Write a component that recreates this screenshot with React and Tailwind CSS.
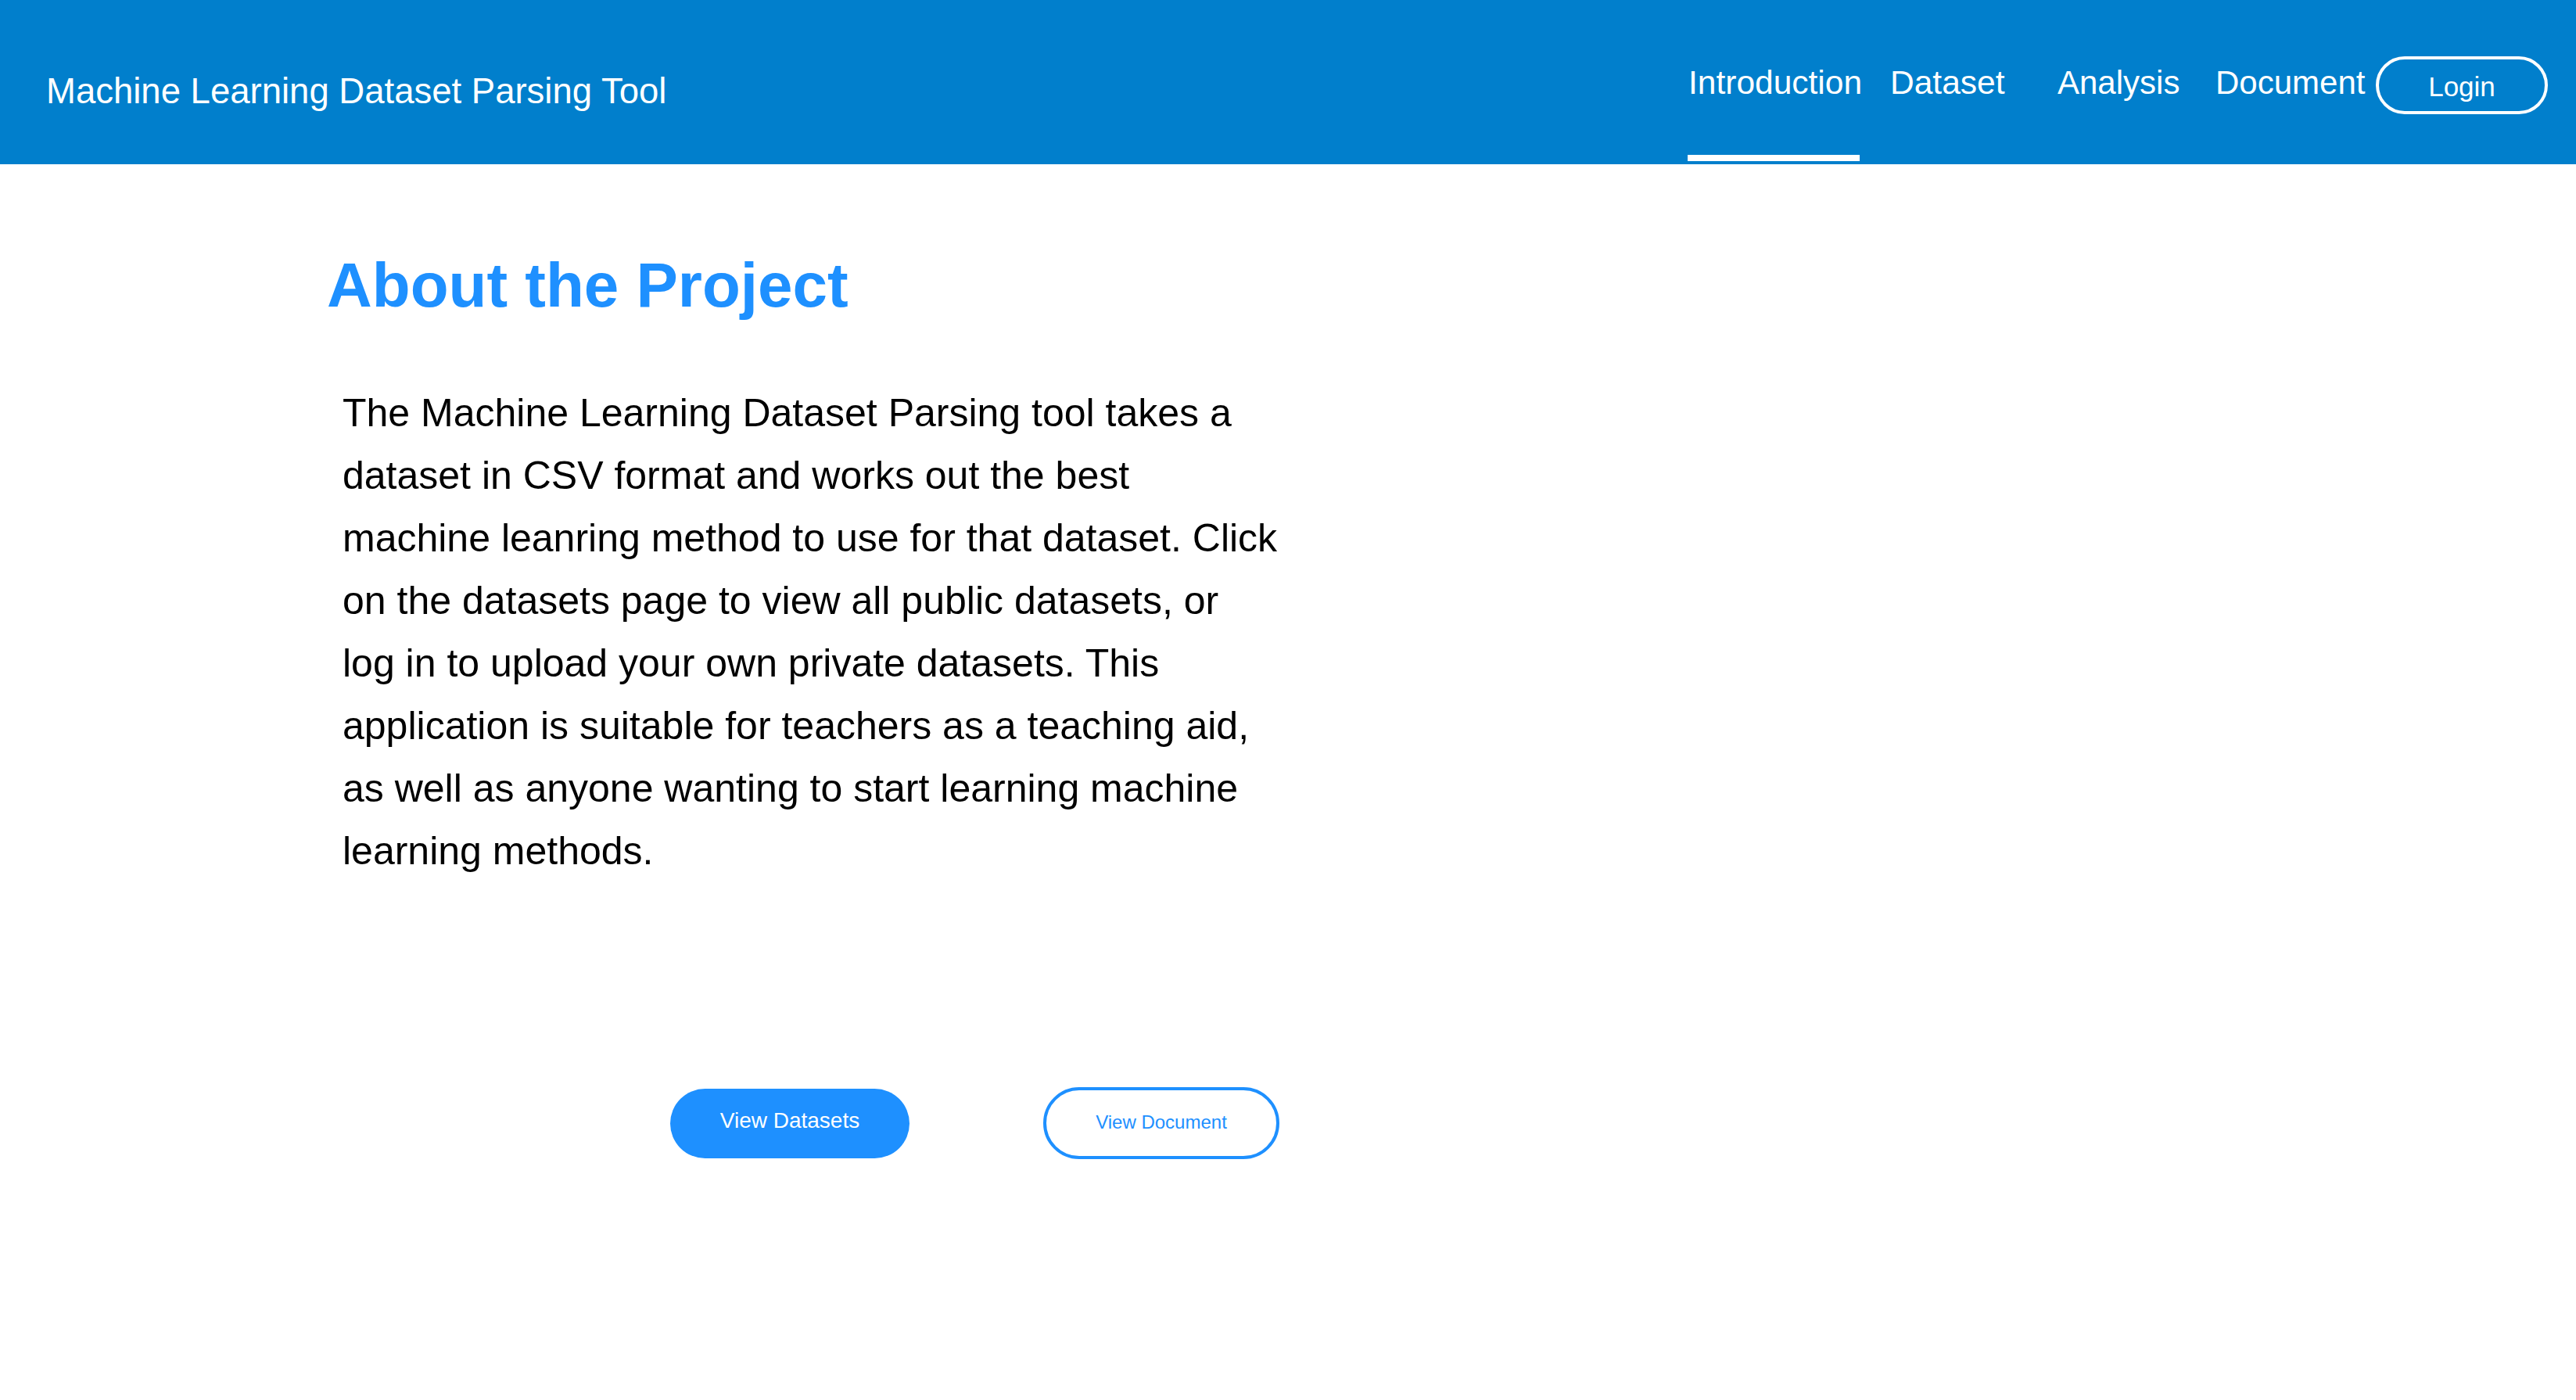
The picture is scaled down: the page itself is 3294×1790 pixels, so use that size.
export default function App() {
  const font = { fontFamily: '"Liberation Sans", Arial, Helvetica, sans-serif' };
  return (
    <div className="min-h-[1790px] w-full bg-white" style={font}>
      <header className="flex h-[210px] w-full bg-[#017fcc] text-white">
        <div className="pl-[59px] pt-[94px] text-[45.5px] leading-none">Machine Learning Dataset Parsing Tool</div>
        <nav className="ml-auto flex pr-[36px]">
          <div className="flex w-[259px] flex-col justify-between pb-[4px] pt-[85px]">
            <span className="pl-[1px] text-[42.5px] leading-none">Introduction</span>
            <div className="h-[8px] w-[220px] bg-white" />
          </div>
          <div className="w-[214px] pt-[85px] text-[42.5px] leading-none">Dataset</div>
          <div className="w-[202px] pt-[85px] text-[42px] leading-none">Analysis</div>
          <div className="w-[205px] pt-[85px] text-[42px] leading-none">Document</div>
          <div className="pt-[72px]">
            <button className="flex h-[74px] w-[220px] items-center justify-center rounded-full border-[4px] border-white pt-[2px] text-[35px] leading-none text-white">
              Login
            </button>
          </div>
        </nav>
      </header>
      <main className="flex flex-col">
        <h1 className="ml-[418px] mt-[115px] text-[80px] font-bold leading-none text-[#1e90ff]">About the Project</h1>
        <p className="ml-[438px] mt-[83px] w-[1197px] text-[50px] leading-[80px] text-black">
          The Machine Learning Dataset Parsing tool takes a dataset in CSV format and works out the best machine leanring method to use for that dataset. Click on the datasets page to view all public datasets, or log in to upload your own private datasets. This application is suitable for teachers as a teaching aid, as well as anyone wanting to start learning machine learning methods.
        </p>
        <div className="ml-[857px] mt-[262px] flex items-center gap-[171px]">
          <button className="flex h-[89px] w-[306px] items-center justify-center rounded-full bg-[#1e90ff] pb-[6px] text-[28px] leading-none text-white">
            View Datasets
          </button>
          <button className="flex h-[92px] w-[302px] items-center justify-center rounded-full border-[4px] border-[#1e90ff] bg-white pb-[3px] text-[24px] leading-none text-[#1e90ff]">
            View Document
          </button>
        </div>
      </main>
    </div>
  );
}
